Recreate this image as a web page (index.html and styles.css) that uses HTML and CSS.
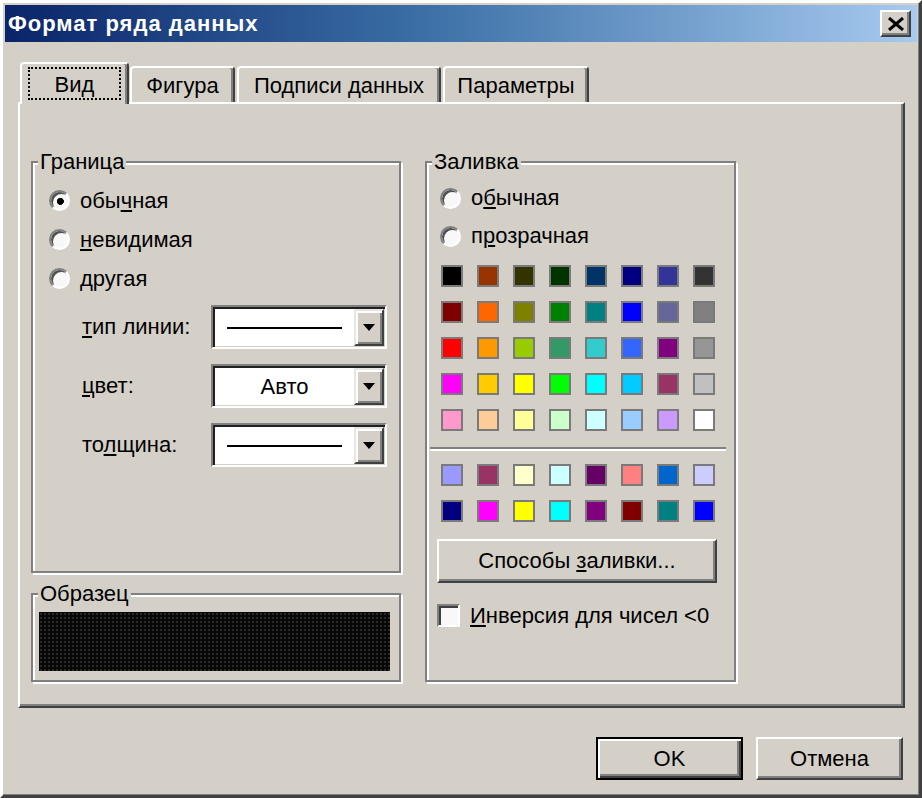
FILE: index.html
```html
<!DOCTYPE html>
<html lang="ru">
<head>
<meta charset="utf-8">
<title>Формат ряда данных</title>
<link rel="stylesheet" href="styles.css">
</head>
<body>
<div class="window">
  <div class="titlebar">
    <span class="title">Формат ряда данных</span>
    <button class="close" type="button" aria-label="Закрыть">
      <svg width="18" height="14" viewBox="0 0 18 14"><path d="M2 1 L16 13 M16 1 L2 13" stroke="#000" stroke-width="3" fill="none"/></svg>
    </button>
  </div>
  <div class="content">
    <div class="tabs">
      <div class="tab active"><span class="focus">Вид</span></div>
      <div class="tab t-fig">Фигура</div>
      <div class="tab t-pod">Подписи данных</div>
      <div class="tab t-par">Параметры</div>
    </div>
    <div class="panel">
      <div class="col-left">
        <fieldset class="group g-border">
          <legend>Граница</legend>
          <div class="g-body b-body">
            <div class="radio-row"><span class="radio checked"></span><span>обы<u>ч</u>ная</span></div>
            <div class="radio-row"><span class="radio"></span><span><u>н</u>евидимая</span></div>
            <div class="radio-row"><span class="radio"></span><span>другая</span></div>
            <div class="form-rows">
              <div class="form-row">
                <span class="flabel"><u>т</u>ип линии:</span>
                <div class="combo">
                  <div class="combo-field"><span class="line"></span></div>
                  <span class="combo-btn"><svg width="12" height="7" viewBox="0 0 12 7"><path d="M0 0 H12 L6 7 Z" fill="#000"/></svg></span>
                </div>
              </div>
              <div class="form-row">
                <span class="flabel"><u>ц</u>вет:</span>
                <div class="combo">
                  <div class="combo-field">Авто</div>
                  <span class="combo-btn"><svg width="12" height="7" viewBox="0 0 12 7"><path d="M0 0 H12 L6 7 Z" fill="#000"/></svg></span>
                </div>
              </div>
              <div class="form-row">
                <span class="flabel">то<u>л</u>щина:</span>
                <div class="combo">
                  <div class="combo-field"><span class="line"></span></div>
                  <span class="combo-btn"><svg width="12" height="7" viewBox="0 0 12 7"><path d="M0 0 H12 L6 7 Z" fill="#000"/></svg></span>
                </div>
              </div>
            </div>
          </div>
        </fieldset>
        <fieldset class="group g-sample">
          <legend>Образец</legend>
          <div class="g-body s-body"><div class="sample"></div></div>
        </fieldset>
      </div>
      <fieldset class="group g-fill">
        <legend>Заливка</legend>
        <div class="g-body f-body">
          <div class="radio-row f-radio"><span class="radio"></span><span>о<u>б</u>ычная</span></div>
          <div class="radio-row f-radio"><span class="radio"></span><span>п<u>р</u>озрачная</span></div>
          <div class="palette">
            <span class="sw" style="--c:#000000"></span><span class="sw" style="--c:#993300"></span><span class="sw" style="--c:#333300"></span><span class="sw" style="--c:#003300"></span><span class="sw" style="--c:#003366"></span><span class="sw" style="--c:#000080"></span><span class="sw" style="--c:#333399"></span><span class="sw" style="--c:#333333"></span>
            <span class="sw" style="--c:#800000"></span><span class="sw" style="--c:#FF6600"></span><span class="sw" style="--c:#808000"></span><span class="sw" style="--c:#008000"></span><span class="sw" style="--c:#008080"></span><span class="sw" style="--c:#0000FF"></span><span class="sw" style="--c:#666699"></span><span class="sw" style="--c:#808080"></span>
            <span class="sw" style="--c:#FF0000"></span><span class="sw" style="--c:#FF9900"></span><span class="sw" style="--c:#99CC00"></span><span class="sw" style="--c:#339966"></span><span class="sw" style="--c:#33CCCC"></span><span class="sw" style="--c:#3366FF"></span><span class="sw" style="--c:#800080"></span><span class="sw" style="--c:#969696"></span>
            <span class="sw" style="--c:#FF00FF"></span><span class="sw" style="--c:#FFCC00"></span><span class="sw" style="--c:#FFFF00"></span><span class="sw" style="--c:#00FF00"></span><span class="sw" style="--c:#00FFFF"></span><span class="sw" style="--c:#00CCFF"></span><span class="sw" style="--c:#993366"></span><span class="sw" style="--c:#C0C0C0"></span>
            <span class="sw" style="--c:#FF99CC"></span><span class="sw" style="--c:#FFCC99"></span><span class="sw" style="--c:#FFFF99"></span><span class="sw" style="--c:#CCFFCC"></span><span class="sw" style="--c:#CCFFFF"></span><span class="sw" style="--c:#99CCFF"></span><span class="sw" style="--c:#CC99FF"></span><span class="sw" style="--c:#FFFFFF"></span>
          </div>
          <div class="sep"></div>
          <div class="palette p2">
            <span class="sw" style="--c:#9999FF"></span><span class="sw" style="--c:#993366"></span><span class="sw" style="--c:#FFFFCC"></span><span class="sw" style="--c:#CCFFFF"></span><span class="sw" style="--c:#660066"></span><span class="sw" style="--c:#FF8080"></span><span class="sw" style="--c:#0066CC"></span><span class="sw" style="--c:#CCCCFF"></span>
            <span class="sw" style="--c:#000080"></span><span class="sw" style="--c:#FF00FF"></span><span class="sw" style="--c:#FFFF00"></span><span class="sw" style="--c:#00FFFF"></span><span class="sw" style="--c:#800080"></span><span class="sw" style="--c:#800000"></span><span class="sw" style="--c:#008080"></span><span class="sw" style="--c:#0000FF"></span>
          </div>
          <button class="btn fill-btn" type="button">Способы <u>з</u>аливки...</button>
          <div class="check-row"><span class="checkbox"></span><span><u>И</u>нверсия для чисел &lt;0</span></div>
        </div>
      </fieldset>
    </div>
    <div class="footer">
      <button class="btn default" type="button">OK</button>
      <button class="btn" type="button">Отмена</button>
    </div>
  </div>
</div>
</body>
</html>
```

FILE: styles.css
```css
* { box-sizing: border-box; }
html, body { margin: 0; padding: 0; }
body {
  width: 922px;
  height: 798px;
  overflow: hidden;
  background: #d4d0c8;
  font-family: "Liberation Sans", Arial, sans-serif;
  font-size: 22px;
  color: #000;
}
u { text-underline-offset: 2px; text-decoration-thickness: 2px; }

.window {
  width: 922px;
  height: 798px;
  border: 3px solid;
  border-color: #ffffff #404040 #404040 #ffffff;
  box-shadow: inset -1px -1px 0 #808080;
  padding: 2px;
  display: flex;
  flex-direction: column;
}

.titlebar {
  height: 37px;
  flex: none;
  display: flex;
  align-items: center;
  justify-content: space-between;
  padding: 0 6px 0 3px;
  background: linear-gradient(to right, #0a246a 0%, #3a6ea5 45%, #a6caf0 100%);
}
.title {
  color: #fff;
  font-weight: bold;
  font-size: 22px;
  letter-spacing: 1px;
}
.close {
  width: 31px;
  height: 27px;
  padding: 0;
  background: #d4d0c8;
  border: 2px solid;
  border-color: #ffffff #404040 #404040 #ffffff;
  box-shadow: inset -2px -2px 0 #808080;
  display: flex;
  align-items: center;
  justify-content: center;
}

.content {
  flex: 1;
  padding: 20px 12px 0 13px;
  display: flex;
  flex-direction: column;
}

.tabs {
  height: 42px;
  flex: none;
  display: flex;
  align-items: flex-end;
  padding-left: 2px;
}
.tab {
  height: 36px;
  margin-bottom: 2px;
  background: #d4d0c8;
  border-top: 2px solid #fff;
  border-left: 2px solid #fff;
  border-right: 2px solid #404040;
  border-radius: 4px 4px 0 0;
  box-shadow: inset -2px 0 0 #808080;
  display: flex;
  align-items: center;
  justify-content: center;
  padding-top: 2px;
}
.tab.active {
  width: 109px;
  height: 42px;
  margin-bottom: 0;
  position: relative;
  z-index: 1;
  padding: 3px 6px 4px 6px;
}
.focus {
  flex: 1;
  align-self: stretch;
  border: 2px dotted #000;
  display: flex;
  align-items: center;
  justify-content: center;
  padding-top: 2px;
}
.t-fig { width: 105px; margin-left: 1px; }
.t-pod { width: 204px; margin-left: 2px; }
.t-par { width: 146px; margin-left: 2px; }

.panel {
  margin-top: -2px;
  height: 606px;
  flex: none;
  border-top: 2px solid #fff;
  border-left: 2px solid #fff;
  border-right: 2px solid #404040;
  border-bottom: 2px solid #404040;
  box-shadow: inset -2px -2px 0 #808080;
  display: grid;
  grid-template-columns: 370px 311px;
  column-gap: 24px;
  align-content: start;
  align-items: start;
  padding: 47px 0 0 11px;
}

.col-left {
  display: flex;
  flex-direction: column;
}

.group {
  margin: 0;
  padding: 0;
  min-width: 0;
  border: 2px solid #808080;
  box-shadow: inset 2px 2px 0 #fff, 2px 2px 0 #fff;
}
.group legend {
  margin-left: 5px;
  padding: 0 2px;
  line-height: 22px;
  background: #d4d0c8;
}

.g-border { height: 422px; }
.b-body { padding: 8px 0 0 16px; }

.radio-row {
  display: flex;
  align-items: center;
  gap: 10px;
  height: 39px;
}
.radio {
  width: 21px;
  height: 21px;
  flex: none;
  border-radius: 50%;
  border: 2px solid;
  border-color: #808080 #ffffff #ffffff #808080;
  box-shadow: inset 2px 2px 0 #505050;
  background: #f8f8f8;
}
.radio.checked {
  background: radial-gradient(circle at 55% 55%, #000 0 3.2px, #f8f8f8 3.8px);
}

.form-rows {
  margin-top: 7px;
  display: flex;
  flex-direction: column;
  gap: 15px;
  padding-left: 33px;
}
.form-row {
  display: flex;
  align-items: center;
  height: 44px;
}
.flabel { width: 129px; flex: none; }
.combo {
  width: 176px;
  height: 44px;
  display: flex;
  border: 2px solid;
  border-color: #808080 #ffffff #ffffff #808080;
  box-shadow: inset 2px 2px 0 #202020, inset -1px -1px 0 #d4d0c8;
  background: #fff;
  padding: 2px 1px 1px 2px;
}
.combo-field {
  flex: 1;
  display: flex;
  align-items: center;
  justify-content: center;
}
.line {
  width: 115px;
  height: 2px;
  background: #000;
}
.combo-btn {
  width: 30px;
  flex: none;
  background: #d4d0c8;
  border: 2px solid;
  border-color: #e8e6e0 #404040 #404040 #e8e6e0;
  box-shadow: inset 2px 2px 0 #fff, inset -2px -2px 0 #808080;
  display: flex;
  align-items: center;
  justify-content: center;
}

.g-sample { height: 99px; margin-top: 10px; }
.s-body { padding: 7px 0 0 6px; }
.sample {
  width: 351px;
  height: 59px;
  background-color: #070707;
  background-image: radial-gradient(circle, #2a2a2a 0.8px, transparent 1.2px);
  background-size: 4px 4px;
}

.g-fill { height: 531px; }
.f-body { padding: 6px 0 0 10px; display: flex; flex-direction: column; align-items: flex-start; }
.f-radio { height: 38px; padding-left: 3px; }

.palette {
  margin: 10px 0 0 4px;
  display: grid;
  grid-template-columns: repeat(8, 22px);
  grid-auto-rows: 22px;
  gap: 14px;
}
.palette.p2 { margin-top: 13px; }
.sw {
  background: var(--c);
  border: 2px solid #7a7a7a;
}
.sep {
  margin: 16px 0 0 -7px;
  width: 296px;
  height: 4px;
  border-top: 2px solid #808080;
  border-bottom: 2px solid #fff;
}

.btn {
  font: inherit;
  color: #000;
  padding: 0;
  background: #d4d0c8;
  border: 2px solid;
  border-color: #ffffff #404040 #404040 #ffffff;
  box-shadow: inset -2px -2px 0 #808080;
}
.fill-btn {
  margin-top: 17px;
  width: 280px;
  height: 44px;
}
.check-row {
  margin-top: 20px;
  height: 25px;
  display: flex;
  align-items: center;
  gap: 10px;
}
.checkbox {
  width: 23px;
  height: 23px;
  flex: none;
  border: 2px solid;
  border-color: #808080 #ffffff #ffffff #808080;
  box-shadow: inset 2px 2px 0 #404040;
  background: #f8f8f8;
}

.footer {
  display: flex;
  justify-content: flex-end;
  gap: 13px;
  margin-top: 29px;
  padding-right: 2px;
}
.footer .btn {
  width: 147px;
  height: 43px;
}
.btn.default {
  border: 2px solid #000;
  box-shadow: inset 2px 2px 0 #fff, inset -2px -2px 0 #404040, inset -4px -4px 0 #808080;
}
```
